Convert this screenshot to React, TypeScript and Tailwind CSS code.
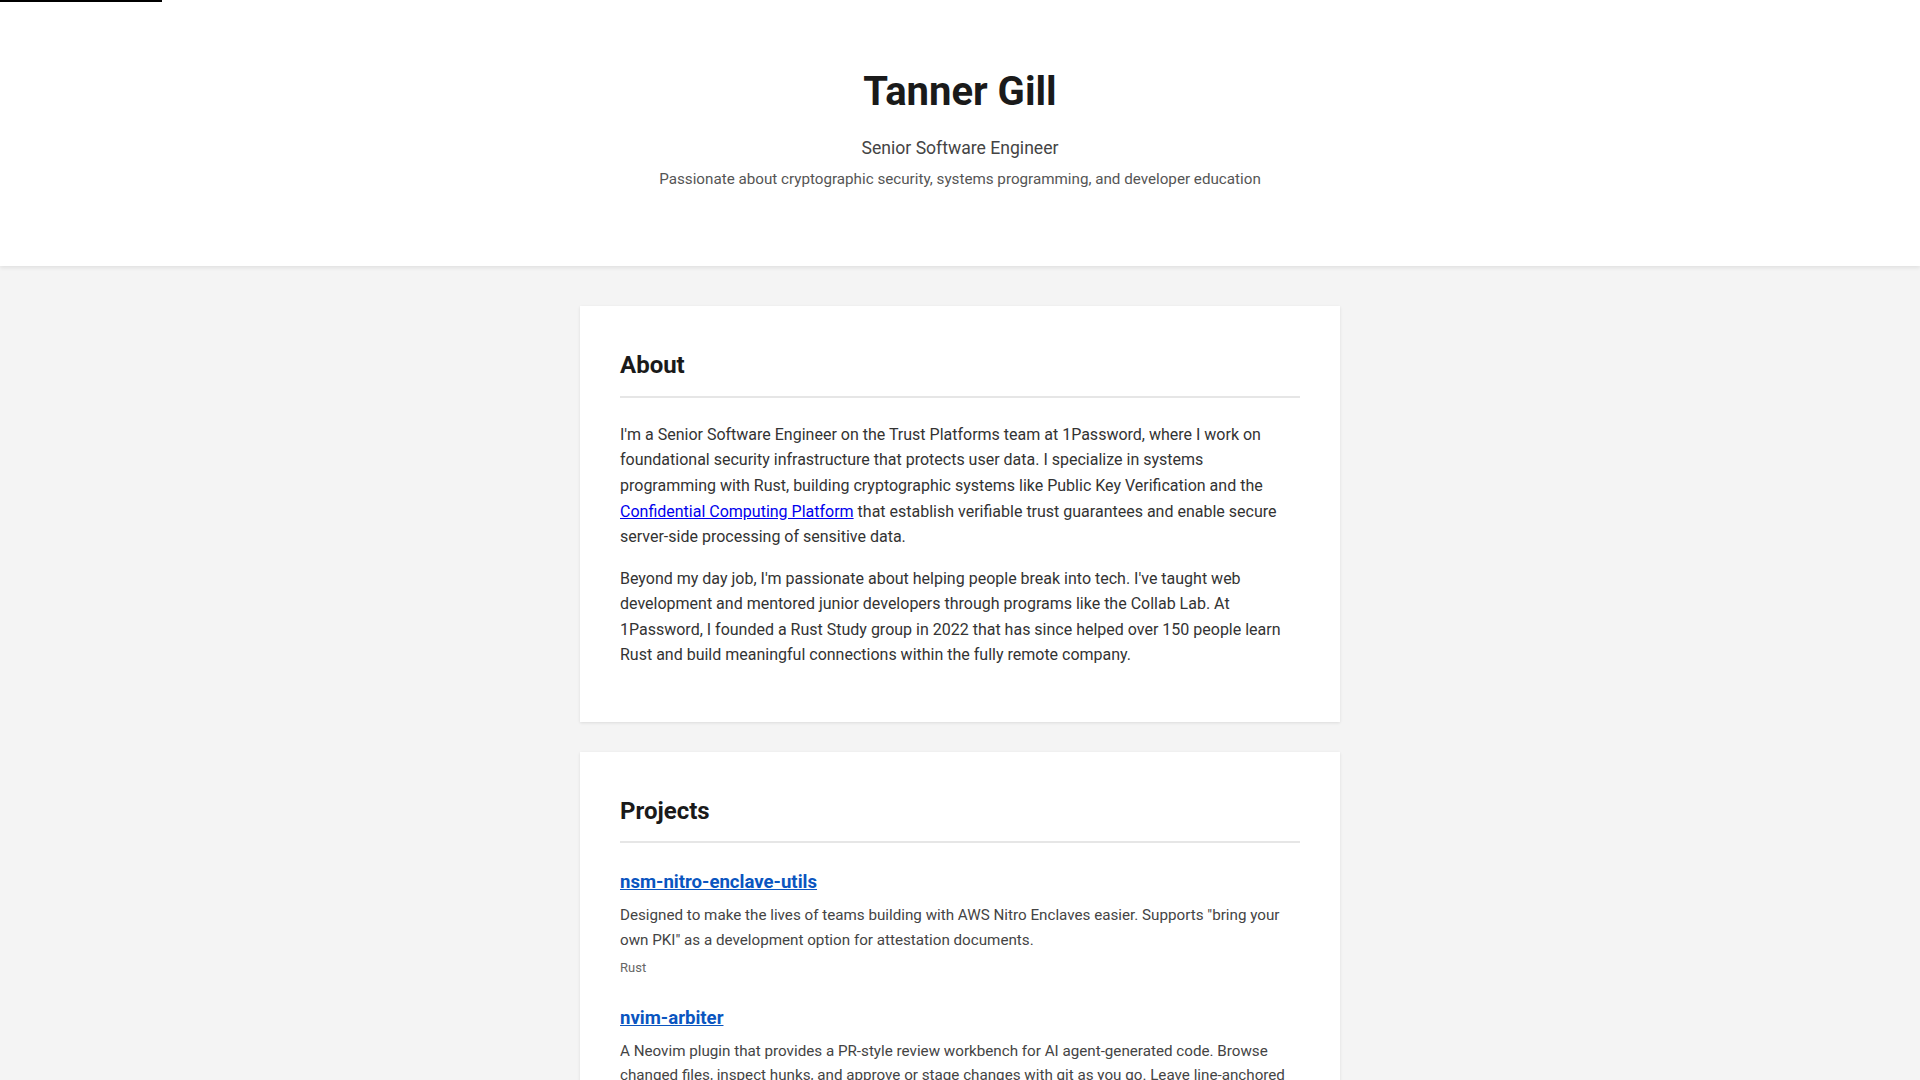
const projects = [
  {
    name: 'nsm-nitro-enclave-utils',
    href: '#',
    description:
      'Designed to make the lives of teams building with AWS Nitro Enclaves easier. Supports "bring your own PKI" as a development option for attestation documents.',
    tag: 'Rust',
  },
  {
    name: 'nvim-arbiter',
    href: '#',
    description:
      "A Neovim plugin that provides a PR-style review workbench for AI agent-generated code. Browse changed files, inspect hunks, and approve or stage changes with git as you go. Leave line-anchored comments that feed back into your agent's next iteration.",
    tag: 'Lua',
  },
]

function Card({ title, last, children }: { title: string; last?: boolean; children: React.ReactNode }) {
  return (
    <section className={`bg-white px-10 pt-10 pb-[38px] shadow-[0_1px_3px_rgba(0,0,0,0.1)] ${last ? '' : 'mb-[30px]'}`}>
      <h2 className="mb-6 border-b-2 border-[#e6e6e6] pb-[11px] text-[24px] leading-[1.6] font-bold text-[#1a1a1a]">
        {title}
      </h2>
      {children}
    </section>
  )
}

export default function App() {
  return (
    <div className="min-h-screen bg-[#f4f4f4] font-['Roboto',sans-serif] text-[#333]">
      {/* reading progress */}
      <div className="fixed top-0 left-0 z-50 h-[2px] w-[162px] bg-black" />

      <header className="bg-white px-4 pt-[68px] pb-[75px] text-center shadow-[0_2px_4px_rgba(0,0,0,0.08)]">
        <h1 className="text-[40px] leading-[1.2] font-bold text-[#1a1a1a]">Tanner Gill</h1>
        <p className="mt-[18px] text-[17.6px] leading-[1.65] text-[#444]">Senior Software Engineer</p>
        <p className="mt-[4px] text-[15.2px] leading-[1.6] text-[#555]">
          Passionate about cryptographic security, systems programming, and developer education
        </p>
      </header>

      <main className="mx-auto w-[760px] pt-10 pb-10">
        <Card title="About">
          <p className="mb-4 text-[16px] leading-[1.6]">
            I'm a Senior Software Engineer on the Trust Platforms team at 1Password, where I work on foundational
            security infrastructure that protects user data. I specialize in systems programming with Rust, building
            cryptographic systems like Public Key Verification and the{' '}
            <a href="#" className="text-[#0000ee] underline">
              Confidential Computing Platform
            </a>{' '}
            that establish verifiable trust guarantees and enable secure server-side processing of sensitive data.
          </p>
          <p className="mb-4 text-[16px] leading-[1.6]">
            Beyond my day job, I'm passionate about helping people break into tech. I've taught web development and
            mentored junior developers through programs like the Collab Lab. At 1Password, I founded a Rust Study group
            in 2022 that has since helped over 150 people learn Rust and build meaningful connections within the fully
            remote company.
          </p>
        </Card>

        <Card title="Projects" last>
          {projects.map((p) => (
            <div key={p.name} className="mb-[24px]">
              <a href={p.href} className="block pt-[1px] text-[18.6px] leading-[1.6] font-bold text-[#0a55c0] underline">
                {p.name}
              </a>
              <p className="mt-[5px] text-[15.2px] leading-[1.6] text-[#444]">{p.description}</p>
              <span className="mt-[6.5px] block text-[13px] leading-[1.6] text-[#666]">{p.tag}</span>
            </div>
          ))}
        </Card>
      </main>
    </div>
  )
}
